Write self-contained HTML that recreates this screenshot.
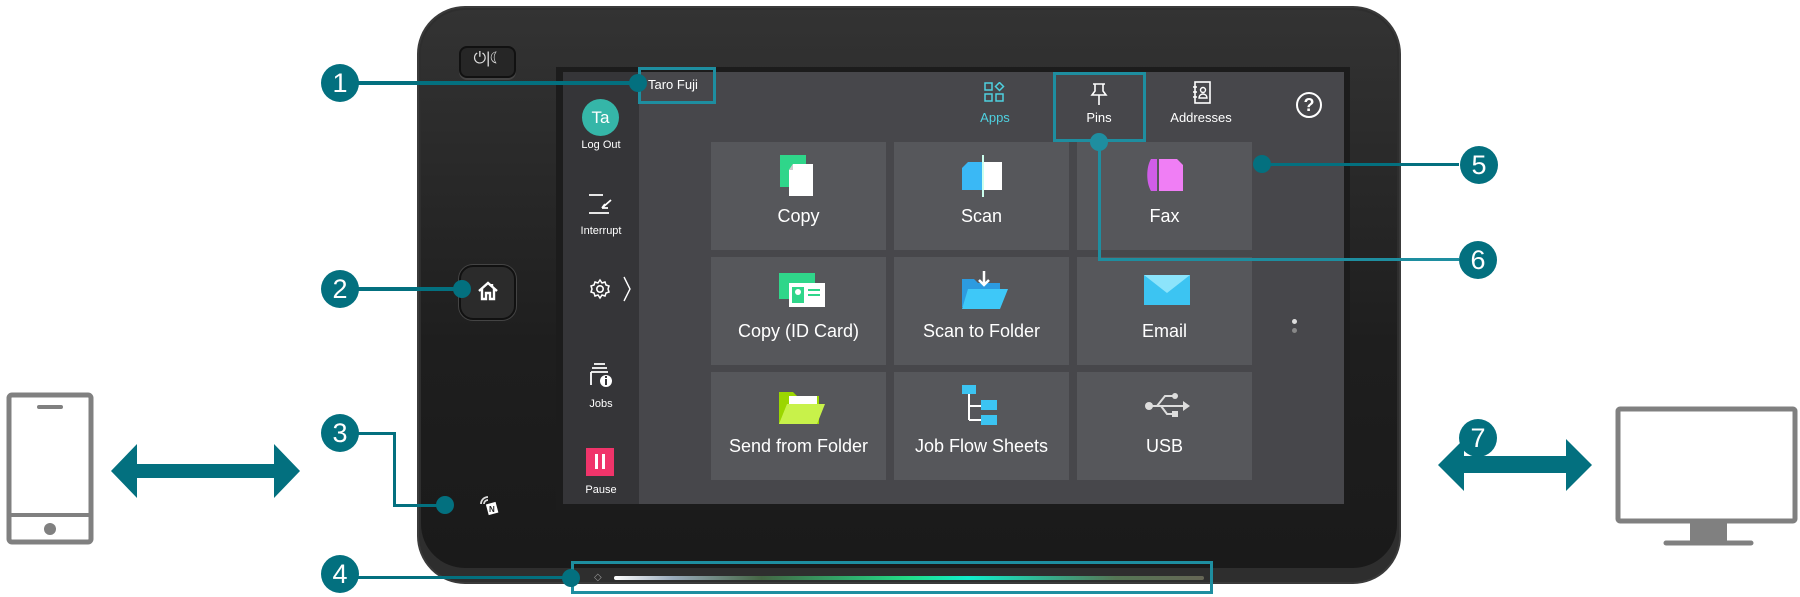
<!DOCTYPE html>
<html><head><meta charset="utf-8"><style>
*{margin:0;padding:0;box-sizing:border-box}
body{width:1800px;height:597px;background:#fff;position:relative;overflow:hidden;font-family:"Liberation Sans",sans-serif}
.a{position:absolute}
.dev{left:417px;top:6px;width:984px;height:578px;border-radius:48px;background:#2e2e2e;border:2px solid #3a3a3a}
.devin{left:421px;top:10px;width:976px;height:558px;border-radius:44px;background:linear-gradient(180deg,#333 0%,#1e1e1e 60%,#1a1a1a 100%)}
.scr{left:556px;top:67px;width:794px;height:443px;background:#1c1c1c}
.side{left:563px;top:72px;width:76px;height:432px;background:#353538}
.main{left:639px;top:72px;width:705px;height:432px;background:#47474b}
.tile{background:#56575b;width:175px;height:108px;color:#fff;font-size:18px;text-align:center}
.tile span{position:absolute;left:0;right:0;top:64px}
.tile svg{position:absolute;left:66px;top:12px}
.lbl{color:#fff;font-size:11px;text-align:center;width:76px;left:563px}
.nav{color:#fff;font-size:13px;text-align:center;width:90px}
.tl{background:#03707f}
.c{width:38px;height:38px;border-radius:50%;background:#03707f;color:#fff;font-size:27px;text-align:center;line-height:38px}
.d{width:18px;height:18px;border-radius:50%;background:#03707f}
.box{border:3px solid #1e8ea0}
</style></head><body>
<div class="a dev"></div>
<div class="a devin"></div>
<!-- power btn -->
<div class="a" style="left:459px;top:46px;width:57px;height:32px;border-radius:8px;background:#262626;border:2px solid #111;box-shadow:0 2px 0 #444"></div>
<div class="a" style="left:459px;top:50px;width:57px;height:26px;color:#ddd;font-size:16px;text-align:center">⏻|☾</div>
<!-- home btn -->
<div class="a" style="left:459px;top:265px;width:57px;height:55px;border-radius:14px;background:#2b2b2b;border:2px solid #111;box-shadow:0 0 0 1px #444"></div>
<svg class="a" style="left:476px;top:279px" width="24" height="24" viewBox="0 0 24 24"><path d="M3 12L12 4l9 8M6 10v10h4v-6h4v6h4V10M16 5v3" fill="none" stroke="#fff" stroke-width="2.4"/></svg>
<!-- nfc -->
<svg class="a" style="left:478px;top:494px" width="22" height="22" viewBox="0 0 22 22"><path d="M3 10a7 7 0 0 1 7-7M6 10a4 4 0 0 1 4-4" fill="none" stroke="#ddd" stroke-width="1.8"/><rect x="9" y="9" width="10" height="11" fill="#fff" transform="rotate(-15 14 14)"/><text x="11" y="18" font-size="8" font-weight="bold" fill="#222">N</text></svg>
<div class="a scr"></div>
<div class="a side"></div>
<div class="a main"></div>
<!-- sidebar -->
<div class="a" style="left:582px;top:99px;width:37px;height:37px;border-radius:50%;background:#35b6a8;color:#fff;font-size:17px;text-align:center;line-height:37px">Ta</div>
<div class="a lbl" style="top:139px">Log Out</div>
<svg class="a" style="left:588px;top:192px" width="26" height="24" viewBox="0 0 26 24"><path d="M1 3h14M1 21h20M23 8l-9 8M14 16h6M14 16l3-4" fill="none" stroke="#fff" stroke-width="1.8"/></svg>
<div class="a lbl" style="top:225px">Interrupt</div>
<svg class="a" style="left:589px;top:278px" width="22" height="22" viewBox="0 0 22 22"><circle cx="11" cy="11" r="3.2" fill="none" stroke="#fff" stroke-width="1.6"/><path d="M11 2l2 3 3-1 1 3 3 1-1 3 1 3-3 1-1 3-3-1-2 3-2-3-3 1-1-3-3-1 1-3-1-3 3-1 1-3 3 1z" fill="none" stroke="#fff" stroke-width="1.5"/></svg>
<svg class="a" style="left:622px;top:276px" width="10" height="26" viewBox="0 0 10 26"><path d="M2 1l6 12-6 12" fill="none" stroke="#fff" stroke-width="1.4"/></svg>
<svg class="a" style="left:588px;top:362px" width="26" height="28" viewBox="0 0 26 28"><path d="M6 2h11M4 6h15M3 10h17M3 10v13" fill="none" stroke="#fff" stroke-width="1.8"/><circle cx="18" cy="19" r="6" fill="#fff"/><rect x="17" y="17" width="2" height="6" fill="#353538"/><rect x="17" y="14" width="2" height="2" fill="#353538"/></svg>
<div class="a lbl" style="top:398px">Jobs</div>
<div class="a" style="left:586px;top:448px;width:28px;height:28px;background:#f0346a"></div>
<div class="a" style="left:595px;top:454px;width:3px;height:15px;background:#fff"></div>
<div class="a" style="left:602px;top:454px;width:3px;height:15px;background:#fff"></div>
<div class="a lbl" style="top:484px">Pause</div>
<!-- top -->
<div class="a" style="left:648px;top:77px;color:#fff;font-size:13px">Taro Fuji</div>
<svg class="a" style="left:983px;top:82px" width="24" height="22" viewBox="0 0 24 22"><rect x="2" y="1" width="7" height="7" fill="none" stroke="#4fd1e0" stroke-width="1.5"/><rect x="2" y="12" width="7" height="7" fill="none" stroke="#4fd1e0" stroke-width="1.5"/><rect x="13" y="12" width="7" height="7" fill="none" stroke="#4fd1e0" stroke-width="1.5"/><path d="M16.5 0.5l4 4-4 4-4-4z" fill="none" stroke="#4fd1e0" stroke-width="1.5"/></svg>
<div class="a nav" style="left:950px;top:110px;color:#4fd1e0">Apps</div>
<svg class="a" style="left:1089px;top:82px" width="20" height="24" viewBox="0 0 20 24"><path d="M4 2h12M6 2v7l-3 4h14l-3-4V2M10 13v10" fill="none" stroke="#fff" stroke-width="1.6"/></svg>
<div class="a nav" style="left:1054px;top:110px">Pins</div>
<svg class="a" style="left:1191px;top:80px" width="22" height="26" viewBox="0 0 22 26"><rect x="4" y="2" width="15" height="21" fill="none" stroke="#fff" stroke-width="1.6"/><path d="M2 7h4M2 12h4M2 17h4" stroke="#fff" stroke-width="1.4"/><circle cx="12" cy="10" r="2.5" fill="none" stroke="#fff" stroke-width="1.4"/><path d="M8 18a4 4 0 0 1 8 0z" fill="none" stroke="#fff" stroke-width="1.4"/></svg>
<div class="a nav" style="left:1156px;top:110px">Addresses</div>
<div class="a" style="left:1296px;top:92px;width:26px;height:26px;border:2px solid #fff;border-radius:50%;color:#fff;font-size:18px;font-weight:bold;text-align:center;line-height:22px">?</div>
<div class="a" style="left:1292px;top:319px;width:5px;height:5px;border-radius:50%;background:#ddd"></div>
<div class="a" style="left:1292px;top:328px;width:5px;height:5px;border-radius:50%;background:#888"></div>
<!-- tiles -->
<div class="a tile" style="left:711px;top:142px"><svg width="44" height="44" viewBox="0 0 44 44"><rect x="3" y="1" width="26" height="32" fill="#2fd68a"/><path d="M16 10h20v32H12V16z" fill="#fff"/><path d="M12 16l4-6v6z" fill="#ccc"/></svg><span>Copy</span></div>
<div class="a tile" style="left:894px;top:142px"><svg width="44" height="44" viewBox="0 0 44 44"><path d="M8 8h15v28H2V14z" fill="#3ab8f5"/><rect x="23" y="8" width="19" height="28" fill="#fff"/><rect x="22" y="1" width="2" height="42" fill="#cfe"/></svg><span>Scan</span></div>
<div class="a tile" style="left:1077px;top:142px"><svg width="44" height="44" viewBox="0 0 44 44"><path d="M8 5h6v32H8c-5-8-5-24 0-32z" fill="#d05de8"/><path d="M16 5h18l6 6v26H16z" fill="#f07ef5"/></svg><span>Fax</span></div>
<div class="a tile" style="left:711px;top:257px"><svg width="50" height="44" viewBox="0 0 50 44"><rect x="2" y="4" width="36" height="26" fill="#2fd68a"/><rect x="12" y="14" width="36" height="24" fill="#fff"/><rect x="15" y="18" width="12" height="16" fill="#2fd68a"/><circle cx="21" cy="23" r="3" fill="#fff"/><path d="M31 21h12M31 26h12" stroke="#2fd68a" stroke-width="2"/></svg><span>Copy (ID Card)</span></div>
<div class="a tile" style="left:894px;top:257px"><svg width="50" height="44" viewBox="0 0 50 44"><path d="M2 10h12l4 4h22v24H2z" fill="#2c9be0"/><path d="M8 20h40l-8 20H2z" fill="#3ec8f8"/><path d="M24 2v14M19 11l5 5 5-5" fill="none" stroke="#fff" stroke-width="2.5"/></svg><span>Scan to Folder</span></div>
<div class="a tile" style="left:1077px;top:257px"><svg width="48" height="40" viewBox="0 0 48 40"><rect x="1" y="6" width="46" height="30" fill="#3cc4f2"/><path d="M1 6l23 18 23-18" fill="#8ce4fb"/></svg><span>Email</span></div>
<div class="a tile" style="left:711px;top:372px"><svg width="50" height="44" viewBox="0 0 50 44"><path d="M2 8h14l4 4h22v28H2z" fill="#9bd600"/><rect x="12" y="12" width="28" height="14" fill="#fff"/><path d="M10 20h38l-8 20H2z" fill="#c8f24a"/></svg><span>Send from Folder</span></div>
<div class="a tile" style="left:894px;top:372px"><svg width="44" height="44" viewBox="0 0 44 44"><rect x="2" y="1" width="14" height="9" fill="#3cc4f2"/><path d="M9 10v26M9 22h12M9 36h12" stroke="#fff" stroke-width="2"/><rect x="21" y="16" width="16" height="10" fill="#3cc4f2"/><rect x="21" y="31" width="16" height="10" fill="#3cc4f2"/></svg><span>Job Flow Sheets</span></div>
<div class="a tile" style="left:1077px;top:372px"><svg width="48" height="40" viewBox="0 0 48 40"><circle cx="6" cy="22" r="4" fill="#ddd"/><path d="M6 22h34M14 22l8-10h8M18 22l6 8h6" fill="none" stroke="#ddd" stroke-width="2"/><circle cx="32" cy="12" r="3" fill="#ddd"/><rect x="29" y="27" width="6" height="6" fill="#ddd"/><path d="M40 17l7 5-7 5z" fill="#ddd"/></svg><span>USB</span></div>
<!-- light bar -->
<div class="a" style="left:614px;top:576px;width:590px;height:4px;border-radius:2px;background:linear-gradient(90deg,#fff 0%,#9ab 10%,#464 25%,#2d8 50%,#1ec 60%,#575 85%,#665 100%)"></div>
<div class="a" style="left:594px;top:572px;color:#999;font-size:10px">◇</div>
<!-- callouts -->
<div class="a box" style="left:638px;top:67px;width:78px;height:37px"></div>
<div class="a box" style="left:1053px;top:72px;width:93px;height:70px"></div>
<div class="a box" style="left:571px;top:561px;width:642px;height:33px"></div>
<div class="a tl" style="left:358px;top:81px;width:280px;height:4px"></div><div class="a d" style="left:629px;top:74px"></div>
<div class="a tl" style="left:358px;top:287px;width:104px;height:4px"></div><div class="a d" style="left:453px;top:280px"></div>
<div class="a tl" style="left:358px;top:432px;width:37px;height:3px"></div>
<div class="a tl" style="left:393px;top:432px;width:3px;height:74px"></div>
<div class="a tl" style="left:393px;top:504px;width:52px;height:3px"></div><div class="a d" style="left:436px;top:496px"></div>
<div class="a tl" style="left:358px;top:576px;width:213px;height:3px"></div><div class="a d" style="left:562px;top:569px"></div>
<div class="a tl" style="left:1262px;top:163px;width:197px;height:3px"></div><div class="a d" style="left:1253px;top:155px"></div>
<div class="a" style="left:1098px;top:142px;width:3px;height:118px;background:#1e8ea0"></div>
<div class="a" style="left:1098px;top:258px;width:361px;height:3px;background:#1e8ea0"></div><div class="a d" style="left:1090px;top:133px;background:#1e8ea0"></div>
<div class="a c" style="left:321px;top:64px">1</div>
<div class="a c" style="left:321px;top:270px">2</div>
<div class="a c" style="left:321px;top:414px">3</div>
<div class="a c" style="left:321px;top:555px">4</div>
<div class="a c" style="left:1460px;top:146px">5</div>
<div class="a c" style="left:1459px;top:241px">6</div>
<!-- phone -->
<svg class="a" style="left:5px;top:391px" width="90" height="155" viewBox="0 0 90 155"><rect x="4" y="4" width="82" height="147" rx="3" fill="none" stroke="#808080" stroke-width="5"/><path d="M4 124h82" stroke="#808080" stroke-width="4"/><path d="M34 16h22" stroke="#808080" stroke-width="4" stroke-linecap="round"/><circle cx="45" cy="138" r="6" fill="#808080"/></svg>
<svg class="a" style="left:108px;top:441px" width="195" height="60" viewBox="0 0 195 60"><path d="M3 30L29 3v20h137V3l26 27-26 27V37H29v20z" fill="#03707f"/></svg>
<!-- monitor -->
<svg class="a" style="left:1436px;top:405px" width="364" height="142" viewBox="0 0 364 142"><path d="M2 60L28 34v17h102V34l26 26-26 26V68H28v18z" fill="#03707f"/><rect x="182" y="4" width="177" height="112" rx="2" fill="none" stroke="#808080" stroke-width="5"/><rect x="254" y="116" width="37" height="20" fill="#808080"/><path d="M230 138h85" stroke="#808080" stroke-width="5" stroke-linecap="round"/></svg>
<div class="a c" style="left:1459px;top:419px">7</div>
</body></html>
